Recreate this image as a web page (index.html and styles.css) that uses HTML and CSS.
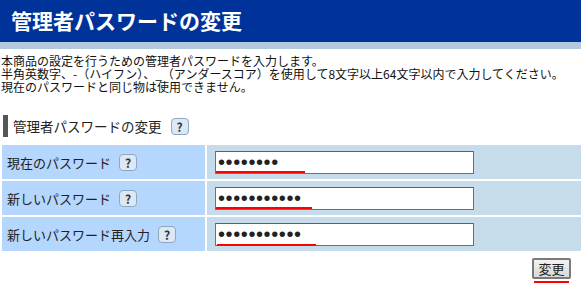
FILE: index.html
```html
<!DOCTYPE html>
<html lang="ja">
<head>
  <meta charset="UTF-8">
  <title>管理者パスワードの変更</title>
  <link rel="stylesheet" href="styles.css">
</head>
<body>
  <div class="header">管理者パスワードの変更</div>

  <div class="intro">
    <p>本商品の設定を行うための管理者パスワードを入力します。</p>
    <p>半角英数字、-（ハイフン）、_（アンダースコア）を使用して8文字以上64文字以内で入力してください。</p>
    <p>現在のパスワードと同じ物は使用できません。</p>
  </div>

  <div class="section-title">
    <span class="bar"></span>
    管理者パスワードの変更 <span class="help">?</span>
  </div>

  <div class="form-grid">
    <div class="label-cell">現在のパスワード <span class="help">?</span></div>
    <div class="value-cell">
      <div class="field">
        <input type="password" value="password">
        <span class="mark mark-1"></span>
      </div>
    </div>

    <div class="label-cell">新しいパスワード <span class="help">?</span></div>
    <div class="value-cell">
      <div class="field">
        <input type="password" value="newpassword">
        <span class="mark mark-2"></span>
      </div>
    </div>

    <div class="label-cell">新しいパスワード再入力 <span class="help">?</span></div>
    <div class="value-cell">
      <div class="field">
        <input type="password" value="newpassword">
        <span class="mark mark-3"></span>
      </div>
    </div>
  </div>

  <div class="actions">
    <div class="btn-wrap">
      <button type="button">変更</button>
    </div>
  </div>
</body>
</html>
```

FILE: styles.css
```css
body {
  margin: 0;
  font-family: "Noto Sans CJK JP", sans-serif;
  color: #111;
  background: white;
}

.header {
  background: #003399;
  color: white;
  font-size: 21px;
  font-weight: bold;
  height: 42px;
  line-height: 40px;
  padding-left: 11px;
  border-bottom: 7px solid #b2c8dc;
}

.intro {
  font-size: 12px;
  padding: 5px 0 0 1px;
}

.intro p {
  margin: 0;
  height: 13px;
  line-height: 13px;
  white-space: nowrap;
}

.section-title {
  display: flex;
  align-items: center;
  gap: 5px;
  margin: 22px 0 0 3px;
  height: 22px;
  font-size: 13.5px;
  color: #222;
}

.section-title .bar {
  width: 5px;
  height: 22px;
  background: #555;
}

.section-title .help {
  margin-left: 4px;
}

.help {
  display: inline-block;
  width: 16px;
  height: 15px;
  line-height: 15px;
  text-align: center;
  font-size: 12px;
  font-weight: bold;
  color: #333;
  background: #dce8f4;
  border: 1px solid #8ea8c4;
  border-radius: 4px;
  vertical-align: middle;
}

.form-grid {
  display: grid;
  grid-template-columns: 203px 1fr;
  grid-auto-rows: 34px;
  gap: 2px;
  padding-left: 2px;
  margin-top: 8px;
}

.label-cell {
  background: #b5d6fd;
  display: flex;
  align-items: center;
  gap: 8px;
  padding-left: 5px;
  font-size: 13px;
  color: #222;
}

.value-cell {
  background: #c6dcea;
  display: flex;
  align-items: center;
  padding-left: 8px;
}

.field {
  position: relative;
}

input[type=password] {
  width: 259px;
  height: 23px;
  box-sizing: border-box;
  border: 1px solid #707070;
  border-top-color: #606060;
  padding: 0 2px;
  font-family: "Liberation Sans", sans-serif;
  font-size: 20px;
  letter-spacing: 0.6px;
  color: #222;
  background: white;
  display: block;
}

.mark {
  position: absolute;
  left: 1px;
  bottom: 1px;
  height: 2px;
  background: #ff0000;
}

.mark-1 { width: 89px; }
.mark-2 { width: 96px; }
.mark-3 { width: 99px; bottom: 0; left: 2px; }

.actions {
  display: flex;
  justify-content: flex-end;
  padding: 7px 10px 0 0;
}

.btn-wrap::after {
  content: "";
  display: block;
  height: 2px;
  margin: 2px 2px 0;
  background: #ff0000;
}

button {
  display: block;
  width: 39px;
  height: 21px;
  font-family: "Noto Sans CJK JP", sans-serif;
  font-size: 13px;
  color: #222;
  padding: 0;
  background: linear-gradient(#f2f2f2, #d8d8d8);
  border: 2px solid #7a7a7a;
  border-radius: 2px;
  line-height: 16px;
}
```
